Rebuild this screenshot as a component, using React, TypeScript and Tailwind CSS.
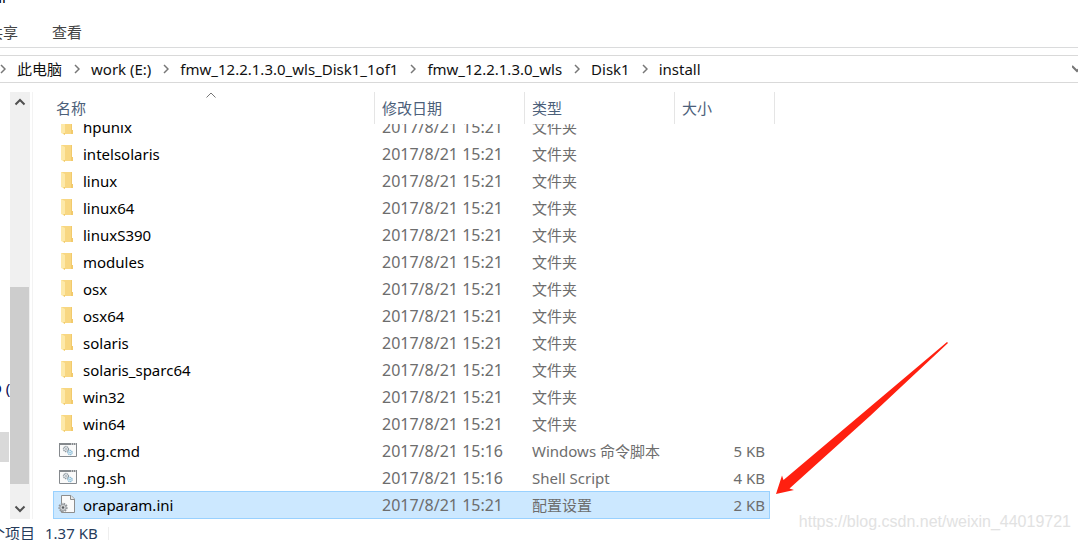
import { useState } from "react";

type FileKind = "folder" | "script" | "config";

type FileEntry = {
  name: string;
  modified: string;
  type: string;
  size?: string;
  kind: FileKind;
};

const folderNames = [
  "hpunix",
  "intelsolaris",
  "linux",
  "linux64",
  "linuxS390",
  "modules",
  "osx",
  "osx64",
  "solaris",
  "solaris_sparc64",
  "win32",
  "win64",
];

const files: FileEntry[] = [
  ...folderNames.map((name): FileEntry => ({ name, modified: "2017/8/21 15:21", type: "文件夹", kind: "folder" })),
  { name: ".ng.cmd", modified: "2017/8/21 15:16", type: "Windows 命令脚本", size: "5 KB", kind: "script" },
  { name: ".ng.sh", modified: "2017/8/21 15:16", type: "Shell Script", size: "4 KB", kind: "script" },
  { name: "oraparam.ini", modified: "2017/8/21 15:21", type: "配置设置", size: "2 KB", kind: "config" },
];

const path = ["此电脑", "work (E:)", "fmw_12.2.1.3.0_wls_Disk1_1of1", "fmw_12.2.1.3.0_wls", "Disk1", "install"];

function FolderIcon() {
  return (
    <svg width="20" height="20" viewBox="0 0 20 20" aria-hidden="true">
      <path d="M3 1h11v12h1v4H6z" fill="#f8d782" />
      <path d="M13 1h1v12h1v4h-2z" fill="#f2ca6c" />
      <path d="M3 1l4 2v15l-4-2z" fill="#fde9a9" />
      <path d="M5 16.500l2 1.500v-2z" fill="#f0c764" />
    </svg>
  );
}

function ScriptIcon() {
  return (
    <svg width="20" height="20" viewBox="0 0 20 20" aria-hidden="true">
      <path d="M1.500 2.500h17v13h-17z" fill="#fafafa" stroke="#85898d" />
      <path d="M1 2h18v2H1z" fill="#85898d" />
      <path d="M13 2.500h1v1h-1zM15 2.500h1v1h-1zM17 2.500h1v1h-1z" fill="#fff" />
      <circle cx="8" cy="8" r="2.500" fill="#e5eaee" stroke="#8b949b" strokeDasharray="1.200 .6" strokeWidth="1.300" />
      <circle cx="8" cy="8" r="0.800" fill="#8b949b" />
      <circle cx="12" cy="11.500" r="2.200" fill="#d8edf8" stroke="#83b4cf" strokeDasharray="1.200 .6" strokeWidth="1.200" />
      <circle cx="12" cy="11.500" r="0.700" fill="#83b4cf" />
    </svg>
  );
}

function ConfigIcon() {
  return (
    <svg width="20" height="20" viewBox="0 0 20 20" aria-hidden="true">
      <path d="M3.500 .5h9.500l3.500 3.500v13.500h-13z" fill="#fafafa" stroke="#8d8d8d" />
      <path d="M12.500 .5v4h4" fill="#e8e8e8" stroke="#8d8d8d" />
      <circle cx="5" cy="12.500" r="3.700" fill="#b9bcbf" stroke="#92969a" strokeDasharray="1.500 1" strokeWidth="2" />
      <circle cx="5" cy="12.500" r="2.200" fill="#d7d9db" />
      <circle cx="5" cy="12.500" r="1.200" fill="#55595d" />
    </svg>
  );
}

function FileIcon({ kind }: { kind: FileKind }) {
  if (kind === "folder") return <FolderIcon />;
  if (kind === "script") return <ScriptIcon />;
  return <ConfigIcon />;
}

function Chevron() {
  return (
    <svg width="6" height="10" viewBox="0 0 6 10" fill="none" className="shrink-0" aria-hidden="true">
      <path d="M1 1l4 4-4 4" stroke="#777" strokeWidth="1.500" />
    </svg>
  );
}

function RibbonTabs() {
  return (
    <div className="h-12 shrink-0 overflow-hidden border-b border-[#dadbdc] text-[15px] text-[#444]">
      <div className="-mt-[13px] -ml-9 h-5 leading-5 text-black">install</div>
      <div className="-ml-3 flex h-[50px] items-center gap-[34px] whitespace-nowrap">
        <button>共享</button>
        <button>查看</button>
      </div>
    </div>
  );
}

function AddressBar() {
  return (
    <nav className="mt-[7px] flex h-7 shrink-0 items-center overflow-hidden border-y border-[#d9d9d9] text-[15px] leading-6 text-[#111]">
      {path.map((part) => (
        <div key={part} className="flex items-center whitespace-nowrap">
          <Chevron />
          <button className="mr-3 ml-[11px]">{part}</button>
        </div>
      ))}
      <button aria-label="Previous locations" className="-mr-1 ml-auto">
        <svg width="10" height="8" viewBox="0 0 10 8" fill="none">
          <path d="M0 1l5 5 5-5" stroke="#777" strokeWidth="2" />
        </svg>
      </button>
    </nav>
  );
}

function NavPane() {
  return (
    <aside className="flex w-[10px] shrink-0 flex-col overflow-hidden pt-[286px]">
      <span className="-ml-[9px] h-5 text-[15px] leading-5 whitespace-nowrap text-[#0a0a50]">D (</span>
      <div className="mt-[34px] h-[30px] w-[9px] bg-[#d9d9d9]"></div>
    </aside>
  );
}

function ScrollBar() {
  return (
    <div className="flex w-5 shrink-0 flex-col bg-[#f0f0f0]">
      <button aria-label="Scroll up" className="flex h-5 items-center justify-center">
        <svg width="12" height="8" viewBox="0 0 12 8" fill="none">
          <path d="M1.500 6.500L6 2l4.500 4.500" stroke="#505050" strokeWidth="2" />
        </svg>
      </button>
      <div className="grow-[175]"></div>
      <div className="mr-px grow-[197] bg-[#cdcdcd]"></div>
      <div className="grow-[15]"></div>
      <button aria-label="Scroll down" className="flex h-5 items-center justify-center">
        <svg width="12" height="8" viewBox="0 0 12 8" fill="none">
          <path d="M1.500 1.500L6 6l4.500-4.500" stroke="#505050" strokeWidth="2" />
        </svg>
      </button>
    </div>
  );
}

function FileRow({ file, selected, onSelect }: { file: FileEntry; selected: boolean; onSelect: () => void }) {
  const cell = selected ? "border-y border-[#99d1ff] bg-[#cce8ff] p-0" : "p-0";
  return (
    <tr onClick={onSelect} className={selected ? "h-7" : "h-[27px]"}>
      <td className={selected ? `${cell} border-l` : `${cell} pl-px`}>
        <div className="flex h-[26px] items-center gap-[5px] pl-1 text-black">
          <FileIcon kind={file.kind} />
          {file.name}
        </div>
      </td>
      <td className={`${cell} pl-[7px] text-base leading-5`}>{file.modified}</td>
      <td className={`${cell} pl-[7px]`}>{file.type}</td>
      <td className={selected ? `${cell} border-r pr-1 text-right` : `${cell} pr-[5px] text-right`}>{file.size}</td>
      <td></td>
    </tr>
  );
}

function FileTable() {
  const [selected, setSelected] = useState("oraparam.ini");
  const th = "border-r border-[#e5e5e5] bg-white p-0 pl-[7px] text-left font-normal";

  return (
    <div className="flex flex-1 flex-col-reverse overflow-hidden border-l border-[#f3f3f3] pl-5">
      <table className="w-[722px] table-fixed border-separate border-spacing-0 text-[15px] leading-5 whitespace-nowrap text-[#6d6d6d]">
        <colgroup>
          <col className="w-[322px]" />
          <col className="w-[150px]" />
          <col className="w-[150px]" />
          <col className="w-[95px]" />
          <col className="w-[5px]" />
        </colgroup>
        <thead className="sticky top-0 z-10 text-[#4c607a]">
          <tr className="h-8">
            <th className="border-r border-[#e5e5e5] bg-white p-0 text-left font-normal">
              <button className="grid h-8 w-full grid-rows-[8px_24px] pr-2 pl-[3px] text-left">
                <svg width="10" height="6" viewBox="0 0 10 6" fill="none" className="justify-self-center">
                  <path d="M.5 5.500L5 1l4.500 4.500" stroke="#777" />
                </svg>
                <span className="leading-4">名称</span>
              </button>
            </th>
            <th className={th}>
              <button>修改日期</button>
            </th>
            <th className={th}>
              <button>类型</button>
            </th>
            <th colSpan={2} className={th}>
              <button>大小</button>
            </th>
          </tr>
        </thead>
        <tbody>
          {files.map((file) => (
            <FileRow
              key={file.name}
              file={file}
              selected={file.name === selected}
              onSelect={() => setSelected(file.name)}
            />
          ))}
        </tbody>
      </table>
    </div>
  );
}

function StatusBar() {
  return (
    <footer className="-ml-[10px] flex h-[21px] shrink-0 gap-[10px] overflow-hidden text-[15px] leading-7 whitespace-nowrap text-[#263c5c]">
      <span>个项目</span>
      <span>1.37 KB</span>
      <span className="mt-2 border-l border-[#eee]"></span>
    </footer>
  );
}

export default function App() {
  return (
    <div className="relative flex h-screen flex-col overflow-hidden bg-white font-['Noto_Sans','Noto_Sans_CJK_SC',sans-serif]">
      <RibbonTabs />
      <AddressBar />
      <main className="mt-[9px] flex min-h-0 flex-1">
        <NavPane />
        <ScrollBar />
        <div className="w-[2px] shrink-0"></div>
        <FileTable />
      </main>
      <StatusBar />

      {/* Arrow pointing at the selected file */}
      <svg
        width="174"
        height="154"
        viewBox="0 0 174 154"
        className="pointer-events-none absolute top-[341px] left-[775px]"
        aria-hidden="true">
        <path d="M172 1L173 2 95 75 14.500 147.500 19 149 1 153 7 134.500 8.500 139 95 66z" fill="#ff2010" />
      </svg>
      <div className="pointer-events-none absolute right-[7px] bottom-[6px] font-['Liberation_Sans',sans-serif] text-base leading-6 text-[#e2e2e2]">
        https://blog.csdn.net/weixin_44019721
      </div>
    </div>
  );
}
